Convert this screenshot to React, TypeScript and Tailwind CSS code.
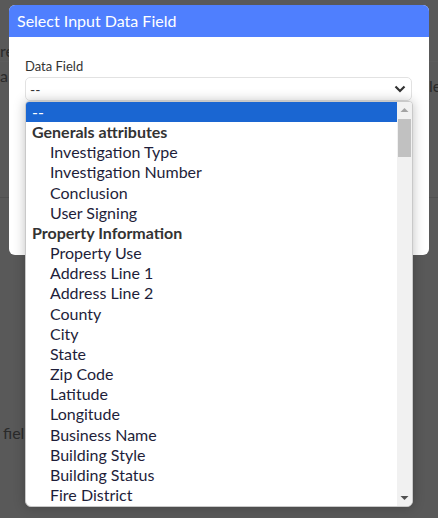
import React from 'react';

const groups = [
  {
    label: 'Generals attributes',
    options: ['Investigation Type', 'Investigation Number', 'Conclusion', 'User Signing'],
  },
  {
    label: 'Property Information',
    options: [
      'Property Use', 'Address Line 1', 'Address Line 2', 'County', 'City', 'State',
      'Zip Code', 'Latitude', 'Longitude', 'Business Name', 'Building Style',
      'Building Status', 'Fire District',
    ],
  },
];

export default function App() {
  return (
    <div className="relative w-[438px] h-[518px] overflow-hidden bg-[#595959] font-['Lato','Noto_Sans',sans-serif] text-[#333]">
      {/* page behind the overlay */}
      <div className="flex flex-col text-[16px] text-[#2a2a2a]">
        <div className="h-[62px] border-b border-[#5c5c5c]" />
        <div className="h-[136px] border-b border-[#505050]" />
      </div>
      <span className="absolute left-0 top-[39px] text-[16px] text-[#2a2a2a]">re</span>
      <span className="absolute left-0 top-[64px] text-[16px] text-[#2a2a2a]">a</span>
      <span className="absolute left-[429px] top-[74px] text-[16px] text-[#2a2a2a]">le</span>
      <span className="absolute left-[3px] top-[421px] text-[16px] text-[#2a2a2a]">fiel</span>

      {/* modal */}
      <div className="absolute left-[9px] top-[5px] w-[420px] h-[250px] rounded-md bg-white overflow-hidden">
        <div className="h-[32px] bg-[#4f7ffe] px-2 flex items-center text-white text-[16px]">
          Select Input Data Field
        </div>
        <div className="px-4 pt-[21px]">
          <div className="text-[13px] leading-[16px] text-[#333]">Data Field</div>
          <div className="mt-[3px] h-[24px] w-[387px] rounded-[5px] border border-[#e2e2e2] flex items-center justify-between pl-[4px] pr-[3px] text-[14px]">
            <span>--</span>
            <svg width="12" height="8" viewBox="0 0 12 8" className="mr-[2px]">
              <path d="M1.5 1.5 L6 6 L10.5 1.5" fill="none" stroke="#333" strokeWidth="2.2" />
            </svg>
          </div>
        </div>
      </div>

      {/* open dropdown list */}
      <div className="absolute left-[25px] top-[101px] w-[388px] h-[406px] rounded-b-[6px] rounded-t-[4px] border border-[#c9c9c9] bg-white shadow-[0_0_12px_rgba(0,0,0,0.25)] overflow-hidden flex">
        <div className="flex-1 flex flex-col text-[16px] leading-[20.15px] text-[#222]">
          <div className="bg-[#1a66d2] text-white pl-[6px]">--</div>
          {groups.map(g => (
            <React.Fragment key={g.label}>
              <div className="font-bold pl-[6px] text-[#333]">{g.label}</div>
              {g.options.map(o => (
                <div key={o} className="pl-[24px] text-[#1e1e3a]">{o}</div>
              ))}
            </React.Fragment>
          ))}
        </div>
        <div className="w-[15px] bg-[#f1f1f1] flex flex-col items-center">
          <svg width="15" height="15" viewBox="0 0 15 15">
            <path d="M3.5 10 L7.5 6 L11.5 10 Z" fill="#a3a3a3" />
          </svg>
          <div className="mt-[2px] w-[13px] h-[38px] bg-[#c1c1c1]" />
          <div className="flex-1" />
          <svg width="15" height="15" viewBox="0 0 15 15">
            <path d="M3.5 5 L7.5 9 L11.5 5 Z" fill="#505050" />
          </svg>
        </div>
      </div>
    </div>
  );
}
